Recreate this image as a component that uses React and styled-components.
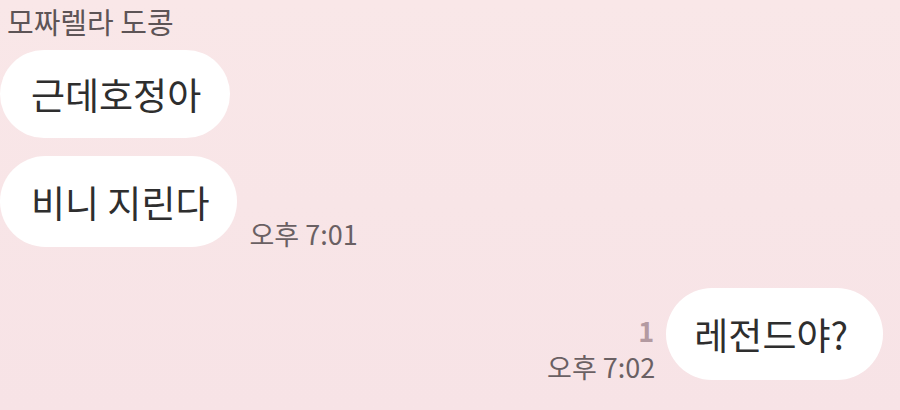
import React from "react";
import styled, { createGlobalStyle } from "styled-components";

const GlobalStyle = createGlobalStyle`
  html, body {
    margin: 0;
    padding: 0;
  }
  body {
    font-family: "Noto Sans CJK KR", "Noto Sans", sans-serif;
    background: #f8e5e7;
  }
`;

const Chat = styled.div`
  width: 900px;
  height: 410px;
  overflow: hidden;
  box-sizing: border-box;
  background: linear-gradient(180deg, #f9e7e8 0%, #f7e3e6 100%);
  display: flex;
  flex-direction: column;
`;

const SenderName = styled.div`
  font-size: 29px;
  line-height: 42px;
  color: #5d5456;
  padding-left: 7px;
  height: 42px;
  margin-bottom: 8px;
`;

const Row = styled.div`
  display: flex;
  align-items: flex-end;
  justify-content: ${({ $mine }) => ($mine ? "flex-end" : "flex-start")};
  padding-right: ${({ $mine }) => ($mine ? "17px" : "0")};
  margin-top: ${({ $gap }) => $gap || 0}px;
`;

const Bubble = styled.div`
  background: #ffffff;
  height: ${({ $h }) => $h || 90}px;
  border-radius: 46px;
  padding: 0 ${({ $pr }) => $pr || 28}px 0 ${({ $pl }) => $pl || 31}px;
  display: flex;
  align-items: center;
  font-size: 37px;
  color: #2e2e2e;
  white-space: nowrap;
  box-sizing: border-box;
`;

const Time = styled.span`
  font-size: 27px;
  color: #6a6063;
  line-height: 39px;
  white-space: nowrap;
`;

const SideTime = styled(Time)`
  margin-left: 13px;
  margin-bottom: -6px;
`;

const Meta = styled.div`
  display: flex;
  flex-direction: column;
  align-items: flex-end;
  margin-right: 11px;
  margin-bottom: -6px;
`;

const Unread = styled.span`
  font-size: 27px;
  font-weight: 700;
  color: #b39aa1;
  line-height: 33px;
  margin-right: 1px;
`;

export default function App() {
  return (
    <>
      <GlobalStyle />
      <Chat>
        <SenderName>모짜렐라 도콩</SenderName>
        <Row>
          <Bubble $h={88} $pr={29}>근데호정아</Bubble>
        </Row>
        <Row $gap={18}>
          <Bubble $h={91} $pr={27}>비니 지린다</Bubble>
          <SideTime>오후 7:01</SideTime>
        </Row>
        <Row $mine $gap={41}>
          <Meta>
            <Unread>1</Unread>
            <Time>오후 7:02</Time>
          </Meta>
          <Bubble $h={92} $pl={28} $pr={35}>
            레전드야?
          </Bubble>
        </Row>
      </Chat>
    </>
  );
}
